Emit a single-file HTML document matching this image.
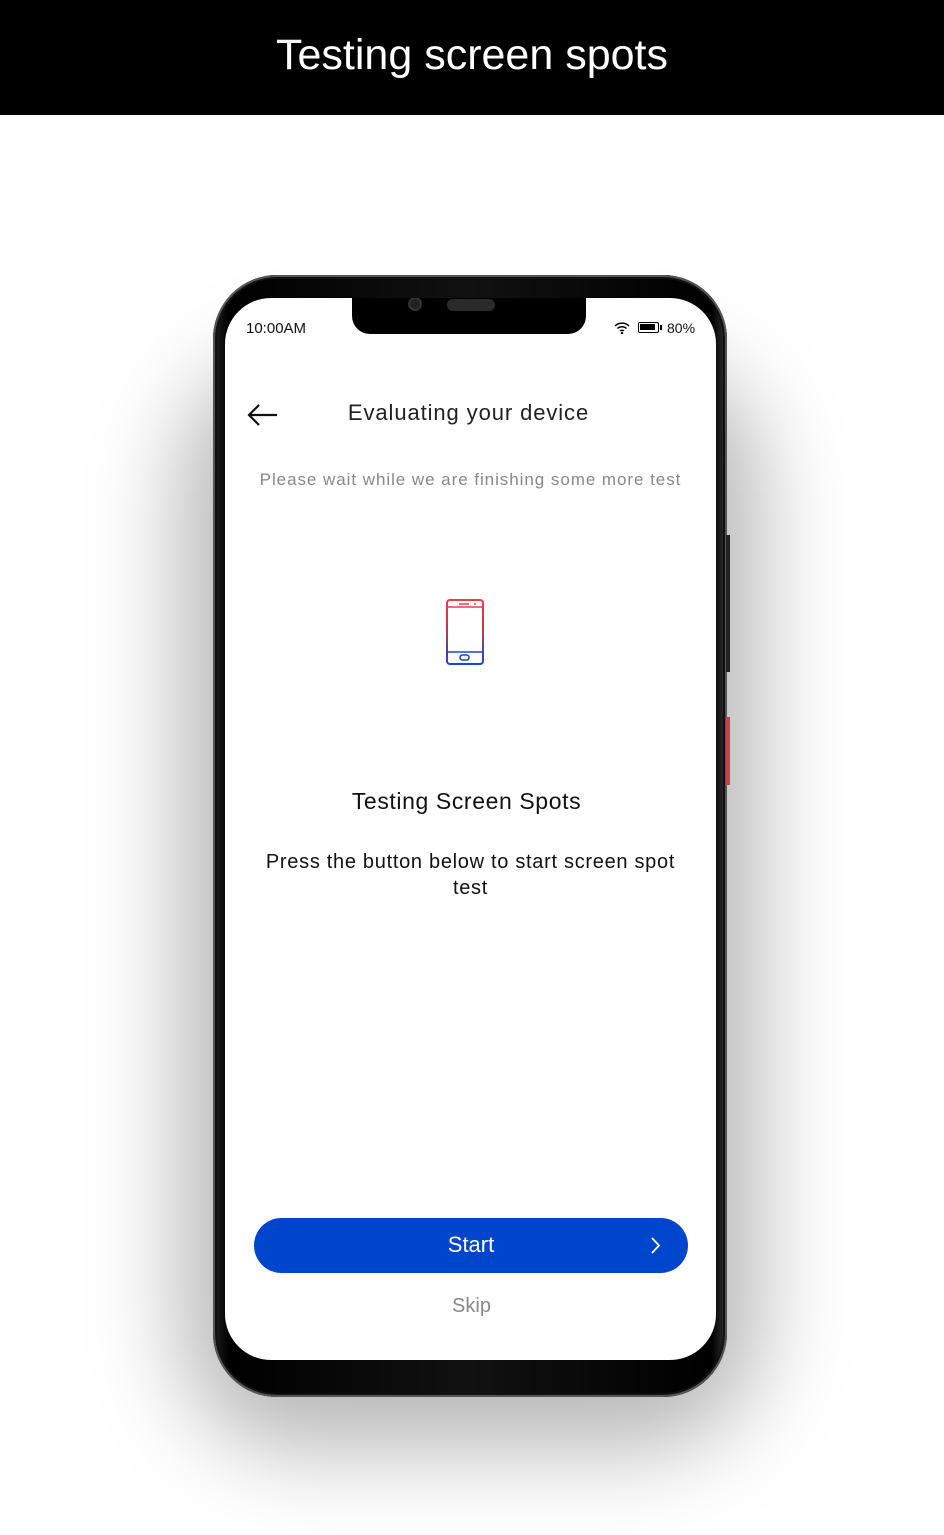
<!DOCTYPE html>
<html><head><meta charset="utf-8"><style>
*{margin:0;padding:0;box-sizing:border-box}
body{width:944px;height:1535px;background:#fff;position:relative;overflow:hidden;font-family:"Liberation Sans",sans-serif}
.hdr{position:absolute;left:0;top:0;width:944px;height:115px;background:#000;color:#fff;font-size:43px;text-align:center;line-height:110px;letter-spacing:0px}
.shadow{position:absolute;left:180px;top:360px;width:580px;height:1090px;border-radius:120px;background:rgba(0,0,0,0.28);filter:blur(45px)}
.phone{position:absolute;left:213px;top:275px;width:514px;height:1122px;border-radius:64px;background:linear-gradient(90deg,#222,#000 3%,#111 50%,#000 97%,#333);box-shadow:inset 0 0 0 2px #555,inset 0 0 0 4px #111}
.btn1{position:absolute;left:726px;top:535px;width:4px;height:137px;background:#222}
.btn2{position:absolute;left:726px;top:717px;width:4px;height:68px;background:#c4414f}
.screen{position:absolute;left:225px;top:298px;width:491px;height:1062px;border-radius:46px;background:#fff;overflow:hidden}
.notch{position:absolute;left:127px;top:-2px;width:234px;height:38px;background:#000;border-radius:0 0 18px 18px}
.cam{position:absolute;left:56px;top:1px;width:14px;height:14px;border-radius:50%;background:#222;border:2px solid #333}
.spk{position:absolute;left:95px;top:3px;width:48px;height:12px;border-radius:6px;background:#2a2a2a}
.t{position:absolute;font-size:15px;color:#111}
</style></head><body>
<div class="hdr">Testing screen spots</div>
<div class="shadow"></div>
<div class="phone"></div>
<div class="btn1"></div><div class="btn2"></div>
<div class="screen">
 <div class="notch"><div class="cam"></div><div class="spk"></div></div>
 <div class="t" style="left:21px;top:22px">10:00AM</div>
 <svg style="position:absolute;left:389px;top:24px" width="16" height="12" viewBox="0 0 16 12"><path d="M1 4a10 10 0 0 1 14 0M3.5 6.5a6.5 6.5 0 0 1 9 0M6 9a3 3 0 0 1 4 0" stroke="#000" stroke-width="1.5" fill="none"/><circle cx="8" cy="11" r="1.2"/></svg>
 <div style="position:absolute;left:413px;top:24px;width:21px;height:11px;border:1.5px solid #000;border-radius:2px;padding:1px"><div style="width:15px;height:6px;background:#000"></div></div>
 <div style="position:absolute;left:435px;top:27px;width:2px;height:5px;background:#000"></div>
 <div class="t" style="left:442px;top:22px;font-size:14px">80%</div>
 <svg style="position:absolute;left:21px;top:104px" width="34" height="26" viewBox="0 0 34 26"><path d="M31 13H3M13 3L3 13l10 10" stroke="#111" stroke-width="2.2" fill="none"/></svg>
 <div style="position:absolute;left:0;width:491px;top:102px;text-align:center;font-size:22px;color:#222;letter-spacing:0.9px;padding-right:4px">Evaluating your device</div>
 <div style="position:absolute;left:0;width:491px;top:172px;text-align:center;font-size:17px;color:#888;letter-spacing:0.95px">Please wait while we are finishing some more test</div>
 <svg style="position:absolute;left:220px;top:300px" width="40" height="70" viewBox="0 0 40 70"><defs><linearGradient id="g" x1="0" y1="0" x2="0" y2="1"><stop offset="0" stop-color="#ee3b4f"/><stop offset="0.5" stop-color="#a44"/><stop offset="1" stop-color="#1744d6"/></linearGradient></defs><rect x="2" y="2" width="36" height="64" rx="3" fill="none" stroke="url(#g)" stroke-width="2"/><path d="M2 9h36M2 54h36M14 6h10" stroke="url(#g)" stroke-width="1.6"/><circle cx="30" cy="6" r="1" fill="#ee3b4f"/><rect x="15" y="57" width="9" height="5" rx="2.5" fill="none" stroke="#1744d6" stroke-width="1.6"/></svg>
 <div style="position:absolute;left:0;width:491px;top:490px;text-align:center;font-size:23px;color:#111;letter-spacing:0.6px;padding-right:8px">Testing Screen Spots</div>
 <div style="position:absolute;left:33px;width:425px;top:551px;text-align:center;font-size:20px;line-height:26px;color:#111;letter-spacing:0.7px">Press the button below to start screen spot test</div>
 <div style="position:absolute;left:29px;top:920px;width:434px;height:55px;border-radius:28px;background:#0046cc;color:#fff;font-size:22px;text-align:center;line-height:54px">Start<svg style="position:absolute;right:27px;top:19px" width="10" height="17" viewBox="0 0 10 17"><path d="M1 1l7 7.5L1 16" stroke="#fff" stroke-width="1.8" fill="none"/></svg></div>
 <div style="position:absolute;left:0;width:491px;top:997px;text-align:center;font-size:20px;color:#888;padding-left:2px">Skip</div>
</div>
</body></html>
